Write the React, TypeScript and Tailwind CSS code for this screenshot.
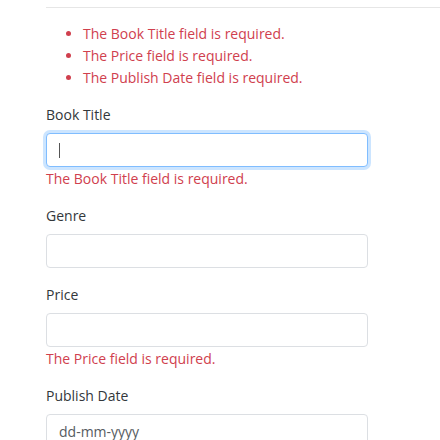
const errors = [
  "The Book Title field is required.",
  "The Price field is required.",
  "The Publish Date field is required.",
];

function Field({
  label,
  error,
  focused,
  placeholder,
}: {
  label: string;
  error?: string;
  focused?: boolean;
  placeholder?: string;
}) {
  return (
    <div className={error ? "mb-[15px]" : "mb-[16px]"}>
      <div className="mb-[7px] leading-[22px] text-[#33373b]">{label}</div>
      <div
        className={
          "flex h-[34px] items-center rounded-[4px] border bg-white pl-[12px] " +
          (focused
            ? "border-[#80bdff] shadow-[0_0_0_3px_rgba(0,123,255,0.2)]"
            : "border-[#dcdfe3]")
        }
      >
        {focused && <span className="h-[15px] w-px bg-[#555]" />}
        {placeholder && (
          <span className="text-[#555b61]">{placeholder}</span>
        )}
      </div>
      {error && (
        <div className="mt-[1px] leading-[22px] text-[#d0404e]">{error}</div>
      )}
    </div>
  );
}

export default function App() {
  return (
    <div
      className="h-[440px] overflow-hidden bg-white pl-[46px] pt-[7px] text-[14px]"
      style={{ fontFamily: '"Open Sans", "Noto Sans", sans-serif' }}
    >
      <hr className="border-t border-[#e6e6e6]" />
      <ul className="mt-[15px] list-disc pl-[37px] leading-[22px] text-[#d0404e]">
        {errors.map((e) => (
          <li key={e}>{e}</li>
        ))}
      </ul>
      <div className="mt-[15px] w-[322px]">
        <Field label="Book Title" error="The Book Title field is required." focused />
        <Field label="Genre" />
        <Field label="Price" error="The Price field is required." />
        <Field label="Publish Date" placeholder="dd-mm-yyyy" />
      </div>
    </div>
  );
}
